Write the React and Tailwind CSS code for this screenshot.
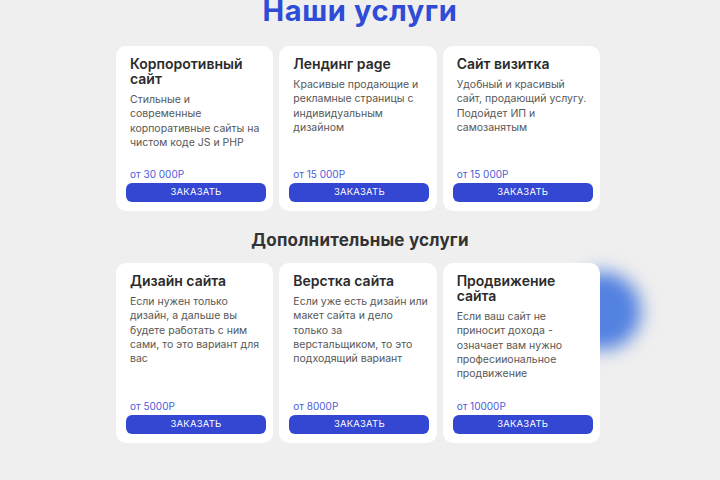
const main = [
  {
    title: ['Корпоротивный', 'сайт'],
    text: ['Стильные и', 'современные', 'корпоративные сайты на', 'чистом коде JS и PHP'],
    price: 'от 30 000Р',
  },
  {
    title: ['Лендинг page'],
    text: ['Красивые продающие и', 'рекламные страницы с', 'индивидуальным', 'дизайном'],
    price: 'от 15 000Р',
  },
  {
    title: ['Сайт визитка'],
    text: ['Удобный и красивый', 'сайт, продающий услугу.', 'Подойдет ИП и', 'самозанятым'],
    price: 'от 15 000Р',
  },
];

const extra = [
  {
    title: ['Дизайн сайта'],
    text: ['Если нужен только', 'дизайн, а дальше вы', 'будете работать с ним', 'сами, то это вариант для', 'вас'],
    price: 'от 5000Р',
  },
  {
    title: ['Верстка сайта'],
    text: ['Если уже есть дизайн или', 'макет сайта и дело', 'только за', 'верстальщиком, то это', 'подходящий вариант'],
    price: 'от 8000Р',
  },
  {
    title: ['Продвижение', 'сайта'],
    text: ['Если ваш сайт не', 'приносит дохода -', 'означает вам нужно', 'професииональное', 'продвижение'],
    price: 'от 10000Р',
  },
];

function Card({ title, text, price, tall }) {
  return (
    <div className={`relative z-10 flex flex-col rounded-[10px] bg-white pt-[10px] pb-[9px] ${tall ? 'h-[180px]' : 'h-[165px]'}`}>
      <h3 className="px-[14px] text-[14px] leading-[15px] font-semibold text-[#2b2b2b]">
        {title.map((l) => <div key={l} className="whitespace-nowrap">{l}</div>)}
      </h3>
      <p className="mt-[7px] px-[14px] text-[10.5px] leading-[14.3px] text-[#575757]">
        {text.map((l) => <span key={l} className="block whitespace-nowrap">{l}</span>)}
      </p>
      <div className="mt-auto px-[14px] text-[10px] leading-[12px] text-[#4b5cd8]">{price}</div>
      <button className="mt-[3px] ml-[10px] h-[19px] w-[140px] rounded-[6px] bg-[#3347d2] text-[9.5px] tracking-[0.2px] text-white">
        ЗАКАЗАТЬ
      </button>
    </div>
  );
}

export default function App() {
  return (
    <div className="min-h-[480px] overflow-hidden bg-[#efefef] pb-8 font-['Inter','Noto_Sans',sans-serif]">
      <h1 className="mt-[-4px] text-center text-[29px] leading-[30px] font-bold tracking-[0.6px] text-[#2f4cd6]">
        Наши услуги
      </h1>
      <div className="mt-[20px] ml-[116px] grid w-[484px] grid-cols-3 gap-[6px]">
        {main.map((c) => <Card key={c.price + c.title[0]} {...c} />)}
      </div>
      <h2 className="mt-[19px] text-center text-[17px] leading-[20px] font-bold tracking-[0.2px] text-[#333333]">
        Дополнительные услуги
      </h2>
      <div className="relative mt-[13px] ml-[116px] grid w-[484px] grid-cols-3 gap-[6px]">
        {/* soft blue glow behind the last card */}
        <div className="absolute left-[447px] top-[9px] z-0 h-[78px] w-[78px] rounded-full bg-[#5281e0] blur-[9px]" />
        {extra.map((c) => <Card key={c.price} tall {...c} />)}
      </div>
    </div>
  );
}
